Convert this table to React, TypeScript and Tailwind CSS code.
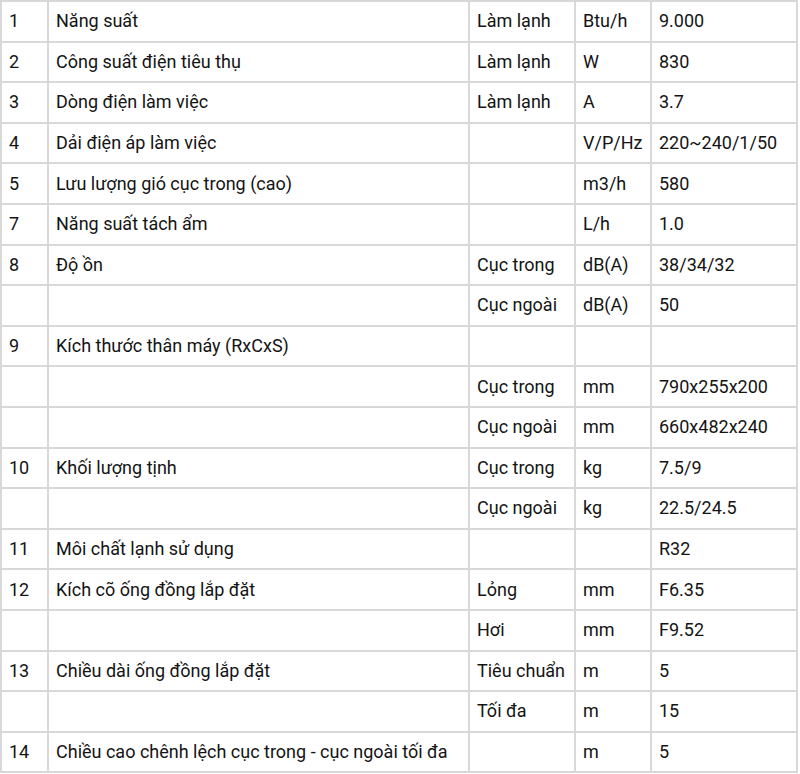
const rows: string[][] = [
  ["1", "Năng suất", "Làm lạnh", "Btu/h", "9.000"],
  ["2", "Công suất điện tiêu thụ", "Làm lạnh", "W", "830"],
  ["3", "Dòng điện làm việc", "Làm lạnh", "A", "3.7"],
  ["4", "Dải điện áp làm việc", "", "V/P/Hz", "220~240/1/50"],
  ["5", "Lưu lượng gió cục trong (cao)", "", "m3/h", "580"],
  ["7", "Năng suất tách ẩm", "", "L/h", "1.0"],
  ["8", "Độ ồn", "Cục trong", "dB(A)", "38/34/32"],
  ["", "", "Cục ngoài", "dB(A)", "50"],
  ["9", "Kích thước thân máy (RxCxS)", "", "", ""],
  ["", "", "Cục trong", "mm", "790x255x200"],
  ["", "", "Cục ngoài", "mm", "660x482x240"],
  ["10", "Khối lượng tịnh", "Cục trong", "kg", "7.5/9"],
  ["", "", "Cục ngoài", "kg", "22.5/24.5"],
  ["11", "Môi chất lạnh sử dụng", "", "", "R32"],
  ["12", "Kích cõ ống đồng lắp đặt", "Lỏng", "mm", "F6.35"],
  ["", "", "Hơi", "mm", "F9.52"],
  ["13", "Chiều dài ống đồng lắp đặt", "Tiêu chuẩn", "m", "5"],
  ["", "", "Tối đa", "m", "15"],
  ["14", "Chiều cao chênh lệch cục trong - cục ngoài tối đa", "", "m", "5"],
];

const widths = ["w-[47px]", "w-[421px]", "w-[106px]", "w-[76px]", "w-[146px]"];

export default function App() {
  return (
    <div className="w-[800px] h-[774px] bg-white font-['Roboto',sans-serif] text-[#141414] text-[18px]">
      <table className="border-collapse table-fixed w-[796px]">
        <tbody>
          {rows.map((r, i) => (
            <tr key={i} className="h-[40.6px]">
              {r.map((c, j) => (
                <td
                  key={j}
                  className={`${widths[j]} border-2 border-[#d8d8d8] pl-[7px] pr-0 align-middle whitespace-nowrap overflow-hidden leading-none`}
                >
                  {c}
                </td>
              ))}
            </tr>
          ))}
        </tbody>
      </table>
    </div>
  );
}
